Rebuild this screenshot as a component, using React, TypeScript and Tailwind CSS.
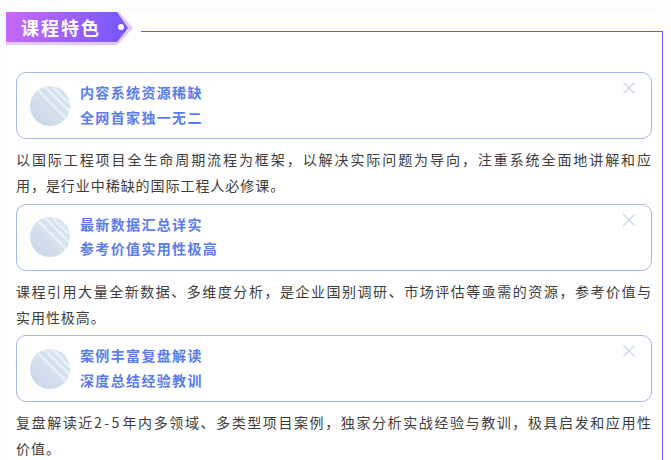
import { useId } from "react";
import type { ReactNode } from "react";

const font = { fontFamily: '"Noto Sans CJK SC", "Liberation Sans", sans-serif' };

const features: { title: string; sub: string; first: ReactNode; rest: string }[] = [
  {
    title: "内容系统资源稀缺",
    sub: "全网首家独一无二",
    first: "以国际工程项目全生命周期流程为框架，以解决实际问题为导向，注重系统全面地讲解和应",
    rest: "用，是行业中稀缺的国际工程人必修课。",
  },
  {
    title: "最新数据汇总详实",
    sub: "参考价值实用性极高",
    first: "课程引用大量全新数据、多维度分析，是企业国别调研、市场评估等亟需的资源，参考价值与",
    rest: "实用性极高。",
  },
  {
    title: "案例丰富复盘解读",
    sub: "深度总结经验教训",
    first: (
      <>
        复盘解读近<span className="tracking-[2.5px]">2-5</span>年内多领域、多类型项目案例，独家分析实战经验与教训，极具启发和应用性
      </>
    ),
    rest: "价值。",
  },
];

function Badge() {
  const id = useId();
  return (
    <svg width="40" height="40" viewBox="0 0 40 40" className="shrink-0">
      <defs>
        <linearGradient id={id + "g"} x1="0" y1="1" x2="1" y2="0">
          <stop offset="0" stopColor="#c8d5e8" />
          <stop offset="0.5" stopColor="#d6e0ee" />
          <stop offset="1" stopColor="#d8e3f0" />
        </linearGradient>
        <clipPath id={id + "c"}>
          <circle cx="20" cy="20" r="20" />
        </clipPath>
      </defs>
      <g clipPath={`url(#${id}c)`}>
        <rect width="40" height="40" fill={`url(#${id}g)`} />
        <path
          d="M4 0 L40 36 M12 -2 L42 28 M20 -2 L42 20 M28 -2 L42 12"
          stroke="#f2f6fb"
          strokeWidth="2.4"
          fill="none"
          opacity="0.75"
        />
      </g>
    </svg>
  );
}

function Close() {
  return (
    <svg width="12" height="12" viewBox="0 0 12 12" className="absolute top-[9px] right-[16px]">
      <path d="M0.5 0.5 L11.5 11.5 M11.5 0.5 L0.5 11.5" stroke="#c5d0ee" strokeWidth="1.1" fill="none" />
    </svg>
  );
}

export default function App() {
  return (
    <div className="w-[671px] h-[460px] overflow-hidden bg-[#fcfdfe] relative pt-3 pl-[6px]" style={font}>
      <div className="absolute top-3 left-[6px] z-10 h-[33px] w-[127px] bg-[#e3c8fb] [clip-path:polygon(0_0,113px_0,127px_16px,111px_33px,0_33px)]">
        <div className="w-[122px] h-[30px] flex items-center pl-[15px] bg-gradient-to-r from-[#c868fb] to-[#7356fb] [clip-path:polygon(0_0,111px_0,122px_16px,111px_30px,0_30px)]">
          <span className="text-white text-[18px] font-bold tracking-[2px] leading-none">课程特色</span>
          <span className="ml-[17px] w-[6px] h-[6px] rounded-full bg-white" />
        </div>
      </div>
      <div className="bg-white w-[657px] h-[460px] pt-[19px]">
        <div className="ml-[135px] h-[1px] bg-[#6a55f0]" />
        <div className="border-r border-[#6a55f0] h-[440px] pt-[40px] pr-[10px] pl-[10px]">
          {features.map((f) => (
            <div key={f.title} className="mb-[5.5px]">
              <div className="relative flex items-center gap-[10px] h-[67px] pl-[13px] rounded-[10px] border border-[#a6b6ea] bg-white">
                <Badge />
                <div className="text-[14px] font-bold text-[#5b7cf0] tracking-[1.35px] leading-[24.5px] -mt-[2px]">
                  <div>{f.title}</div>
                  <div>{f.sub}</div>
                </div>
                <Close />
              </div>
              <div className="mt-[7px] text-[14px] leading-[26px] text-[#3d3d3d] tracking-[0.95px]">
                <p className="text-justify [text-align-last:justify]">{f.first}</p>
                <p>{f.rest}</p>
              </div>
            </div>
          ))}
        </div>
      </div>
    </div>
  );
}
